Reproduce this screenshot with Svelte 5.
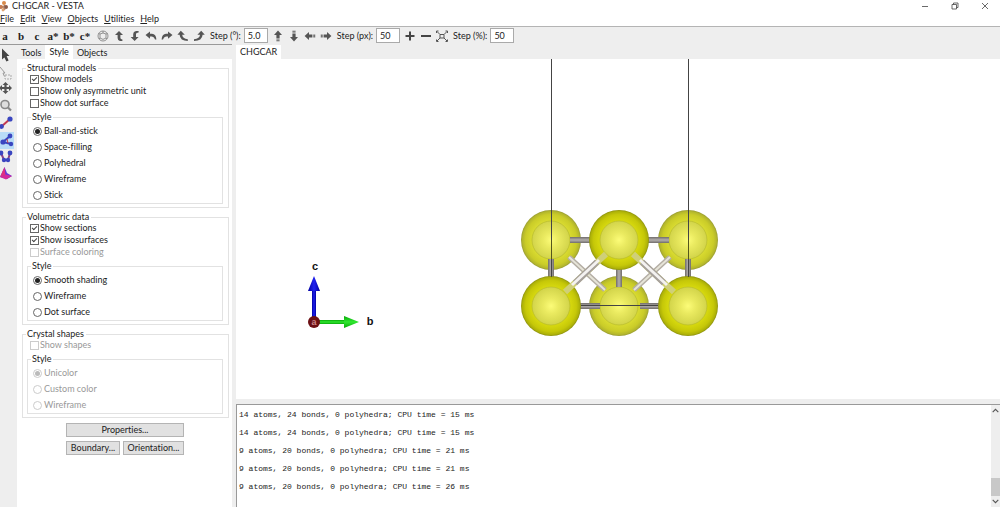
<script lang="ts">
  const menus = ['File', 'Edit', 'View', 'Objects', 'Utilities', 'Help'];
  const axes = ['a', 'b', 'c', 'a*', 'b*', 'c*'];
  const tools = ['select', 'area', 'move', 'zoom', 'distance', 'angle', 'dihedral', 'facing'];

  const rotateIcons = [
    { name: 'Rotate up', d: 'M6 1 L10 5 H7.4 V8 Q7.4 9.2 9.4 9.6 V11 H7 Q4.6 10.6 4.6 8 V5 H2 Z' },
    { name: 'Rotate down', d: 'M5.6 11 L1.6 7 H4.2 V4 Q4.2 1.6 7 1 H9.6 V2.4 Q7 2.8 7 4 V7 H9.6 Z' },
    { name: 'Rotate left', d: 'M0.5 5 L5 1.4 V3.8 H7 Q11 4 11.4 9.6 H10 Q9.4 6.6 7 6.4 H5 V8.8 Z' },
    { name: 'Rotate right', d: 'M11.5 5 L7 1.4 V3.8 H5 Q1 4 0.6 9.6 H2 Q2.6 6.6 5 6.4 H7 V8.8 Z' },
    { name: 'Rotate counterclockwise', d: 'M3.8 0.8 L7.8 4.8 H5.2 Q5.4 8.6 10.8 9.2 V11 Q3 11 2.6 4.8 H0.4 Z' },
    { name: 'Rotate clockwise', d: 'M8.2 0.8 L11.8 4.8 H9.6 Q9.2 11 1 11 V9.2 Q6.8 8.6 7 4.8 H4.4 Z' }
  ];

  const moveIcons = [
    { name: 'Move up', turn: 0 },
    { name: 'Move down', turn: 180 },
    { name: 'Move left', turn: 270 },
    { name: 'Move right', turn: 90 }
  ];

  const groups = [
    {
      title: 'Structural models',
      disabled: false,
      checks: [
        { label: 'Show models', on: true, disabled: false },
        { label: 'Show only asymmetric unit', on: false, disabled: false },
        { label: 'Show dot surface', on: false, disabled: false }
      ],
      styles: ['Ball-and-stick', 'Space-filling', 'Polyhedral', 'Wireframe', 'Stick']
    },
    {
      title: 'Volumetric data',
      disabled: false,
      checks: [
        { label: 'Show sections', on: true, disabled: false },
        { label: 'Show isosurfaces', on: true, disabled: false },
        { label: 'Surface coloring', on: false, disabled: true }
      ],
      styles: ['Smooth shading', 'Wireframe', 'Dot surface']
    },
    {
      title: 'Crystal shapes',
      disabled: true,
      checks: [{ label: 'Show shapes', on: false, disabled: true }],
      styles: ['Unicolor', 'Custom color', 'Wireframe']
    }
  ];

  const backAtoms = [[551, 240], [688, 240], [619, 306]];
  const frontAtoms = [[619, 240], [551, 306], [688, 306]];

  const log = [
    '14 atoms, 24 bonds, 0 polyhedra; CPU time = 15 ms',
    '14 atoms, 24 bonds, 0 polyhedra; CPU time = 15 ms',
    '9 atoms, 20 bonds, 0 polyhedra; CPU time = 21 ms',
    '9 atoms, 20 bonds, 0 polyhedra; CPU time = 21 ms',
    '9 atoms, 20 bonds, 0 polyhedra; CPU time = 26 ms'
  ].join('\n\n');

  let tool = $state('angle');
</script>

<div class="window">
  <header class="titlebar">
    <svg class="logo" viewBox="0 0 10 12" aria-hidden="true">
      <path d="M0 6 L3 7 L5 5 M3 7 L5 10" stroke="#b98a68" stroke-width="1.4" fill="none" />
      <circle cx="4" cy="3" r="2" fill="#d98a4a" />
      <circle cx="1" cy="7" r="2" fill="#c47a50" />
      <circle cx="6" cy="7" r="2" fill="#8a5a48" />
      <circle cx="3" cy="10" r="1.4" fill="#e2a470" />
    </svg>
    <span class="title">CHGCAR - VESTA</span>
    <button class="win" aria-label="Minimize">
      <svg viewBox="0 0 8 8"><path d="M1 4.5 H7" /></svg>
    </button>
    <button class="win" aria-label="Restore">
      <svg viewBox="0 0 8 8"><path d="M1 2.5 H5.5 V7 H1 Z M2.5 2.5 V1 H7 V5.5 H5.5" /></svg>
    </button>
    <button class="win" aria-label="Close">
      <svg viewBox="0 0 8 8"><path d="M1 1 L7 7 M7 1 L1 7" /></svg>
    </button>
  </header>

  <nav class="menubar">
    {#each menus as menu}
      <button><u>{menu[0]}</u>{menu.slice(1)}</button>
    {/each}
  </nav>

  <div class="toolbar">
    <div class="set axes">
      {#each axes as axis}
        <button class="axis">{axis}</button>
      {/each}
    </div>
    <div class="set">
      <button aria-label="Default orientation">
        <svg viewBox="0 0 12 12" fill="none" stroke="#888" stroke-width="0.9">
          <circle cx="6" cy="6" r="5" />
          <path d="M3 4 L6 3 L9 4 V8 L6 9.4 L3 8 Z M6 3 V1 M3 4 L1.4 3.4 M9 4 L10.6 3.4 M3 8 L2 9 M9 8 L10 9" />
        </svg>
      </button>
      {#each rotateIcons as icon}
        <button aria-label={icon.name}>
          <svg viewBox="0 0 12 12" fill="#555"><path d={icon.d} /></svg>
        </button>
      {/each}
    </div>
    <label class="step">Step (°): <input value="5.0" /></label>
    <div class="set">
      {#each moveIcons as icon}
        <button aria-label={icon.name}>
          <svg viewBox="0 0 12 12" fill="#555">
            <g transform="rotate({icon.turn} 6 6)">
              <path d="M6 0.6 L10 5 H7.6 V8 H4.4 V5 H2 Z" />
              <path d="M4.4 8.6 H7.6 V9.6 H4.4 Z M4.4 10.2 H7.6 V11.2 H4.4 Z" />
            </g>
          </svg>
        </button>
      {/each}
    </div>
    <label class="step">Step (px): <input value="50" /></label>
    <div class="set">
      <button aria-label="Zoom in">
        <svg viewBox="0 0 12 12" fill="#444"><path d="M5 1.5 H7 V5 H10.5 V7 H7 V10.5 H5 V7 H1.5 V5 H5 Z" /></svg>
      </button>
      <button aria-label="Zoom out">
        <svg viewBox="0 0 12 12" fill="#444"><path d="M1 5 H11 V7 H1 Z" /></svg>
      </button>
      <button aria-label="Fit to screen">
        <svg viewBox="0 0 12 12" fill="none" stroke="#555">
          <path d="M4 4.5 H8 V8 H4 Z M1 1.5 L4 4.5 M11 1.5 L8 4.5 M1 11 L4 8 M11 11 L8 8" />
          <path d="M0.5 3 V1 H2.5 M9.5 1 H11.5 V3 M0.5 9.5 V11.5 H2.5 M9.5 11.5 H11.5 V9.5" />
        </svg>
      </button>
    </div>
    <label class="step">Step (%): <input value="50" /></label>
  </div>

  <div class="body">
    <div class="tools">
      {#each tools as name}
        <button class:selected={tool === name} aria-label={name} onclick={() => (tool = name)}>
          <svg viewBox="0 0 14 16">
            {#if name === 'select'}
              <path d="M2 0.5 L9.5 8 H6.6 L8.6 12.4 L6.4 13.4 L4.4 9.4 L2 11.4 Z" fill="#444" />
            {:else if name === 'area'}
              <path d="M0 2 L5 8 H3 L4.4 11.4" fill="none" stroke="#999" />
              <path d="M5 10 H11 V14 H5 Z" fill="none" stroke="#aaa" stroke-dasharray="2 1" />
            {:else if name === 'move'}
              <path d="M5.5 0 L8.5 3 H6.6 V5 H9 V3 L12 6 L9 9 V7 H6.6 V9 H8.5 L5.5 12 L2.5 9 H4.4 V7 H2 V9 L-1 6 L2 3 V5 H4.4 V3 H2.5 Z" fill="#555" />
            {:else if name === 'zoom'}
              <circle cx="5" cy="5.5" r="4" fill="#ddd" stroke="#888" stroke-width="1.6" />
              <path d="M8 8.5 L11 11.5" stroke="#888" stroke-width="2.2" />
            {:else if name === 'distance'}
              <path d="M2 10 L10 3" stroke="#c33a50" stroke-width="2" />
              <circle cx="1.5" cy="10.5" r="2.4" fill="#3a46c0" />
              <circle cx="10" cy="3" r="2.6" fill="#3a46c0" />
            {:else if name === 'angle'}
              <path d="M10 3 L3 9 L11 11" stroke="#3a46c0" stroke-width="2" fill="none" />
              <circle cx="10" cy="3" r="2.4" fill="#3a46c0" />
              <circle cx="3" cy="9" r="2.6" fill="#3a46c0" />
              <circle cx="11" cy="11" r="2.2" fill="#3a46c0" />
              <path d="M7 6 L8 10" stroke="#c33a50" />
            {:else if name === 'dihedral'}
              <path d="M1 3 L4 10 L8 10 L10 3" stroke="#8a4488" stroke-width="2" fill="none" />
              <circle cx="1" cy="3" r="2.4" fill="#3a46c0" />
              <circle cx="4" cy="10" r="2.2" fill="#3a46c0" />
              <circle cx="8" cy="10" r="2.2" fill="#3a46c0" />
              <circle cx="10" cy="3" r="2.4" fill="#3a46c0" />
            {:else}
              <path d="M0 10 L4.5 0 L7 6 L12 9 L7 12 Z" fill="#6a35d8" />
              <path d="M0 10 L4.5 0 L5.4 8 Z" fill="#e03080" />
              <path d="M0 10 L5.4 7.6 L12 9 L6 12.4 Z" fill="#d42a9a" />
            {/if}
          </svg>
        </button>
      {/each}
    </div>

    <aside class="side">
      <div class="tabs">
        <button class="tab">Tools</button>
        <button class="tab active">Style</button>
        <button class="tab">Objects</button>
      </div>

      <div class="panel">
        {#each groups as group}
          <fieldset class="group">
            <legend>{group.title}</legend>
            {#each group.checks as check}
              <label class="check" class:off={check.disabled}>
                <input type="checkbox" checked={check.on} disabled={check.disabled} />{check.label}
              </label>
            {/each}
            <fieldset class="styles">
              <legend>Style</legend>
              {#each group.styles as style, i}
                <label class="radio" class:off={group.disabled}>
                  <input type="radio" name={group.title} checked={i === 0} disabled={group.disabled} />{style}
                </label>
              {/each}
            </fieldset>
          </fieldset>
        {/each}

        <div class="actions">
          <button class="wide">Properties...</button>
          <button>Boundary...</button>
          <button>Orientation...</button>
        </div>
      </div>
    </aside>

    <main class="main">
      <div class="tabs">
        <button class="tab active">CHGCAR</button>
      </div>

      <div class="canvas">
        <svg class="scene" viewBox="236 59 764 340" role="img" aria-label="Crystal structure viewed along a">
          <defs>
            <radialGradient id="front">
              <stop offset="0" stop-color="#dede18" />
              <stop offset="0.65" stop-color="#d6d80e" />
              <stop offset="0.85" stop-color="#c6c808" />
              <stop offset="0.95" stop-color="#aeb208" />
              <stop offset="1" stop-color="#8c9010" />
            </radialGradient>
            <radialGradient id="back">
              <stop offset="0" stop-color="#e2e23c" />
              <stop offset="0.65" stop-color="#d8da30" />
              <stop offset="0.85" stop-color="#cacc28" />
              <stop offset="0.95" stop-color="#b4b72c" />
              <stop offset="1" stop-color="#989b34" />
            </radialGradient>
            <radialGradient id="core">
              <stop offset="0" stop-color="#fcfc78" />
              <stop offset="0.4" stop-color="#eaea60" />
              <stop offset="1" stop-color="#d2d44a" />
            </radialGradient>
            <linearGradient id="blue">
              <stop offset="0" stop-color="#0000a0" />
              <stop offset="0.5" stop-color="#2020f0" />
              <stop offset="1" stop-color="#0000a0" />
            </linearGradient>
            <linearGradient id="green" x2="0" y2="1">
              <stop offset="0" stop-color="#08a808" />
              <stop offset="0.5" stop-color="#30e830" />
              <stop offset="1" stop-color="#08a808" />
            </linearGradient>
          </defs>

          <rect x="312" y="289" width="4" height="30" fill="url(#blue)" />
          <path d="M314 276 L320 291 H308 Z" fill="url(#blue)" />
          <rect x="318" y="320" width="30" height="4" fill="url(#green)" />
          <path d="M359 322 L344 316 V328 Z" fill="url(#green)" />
          <circle cx="314" cy="322" r="6" fill="#6c1014" />
          <text class="axis-a" x="314" y="325">a</text>
          <text class="axis-label" x="315" y="270">c</text>
          <text class="axis-label" x="370" y="325">b</text>

          {#each backAtoms as [x, y]}
            <circle cx={x} cy={y} r="30" fill="url(#back)" />
            <circle cx={x} cy={y} r="19" fill="url(#core)" stroke="#b4b72c" stroke-width="0.6" />
          {/each}

          <g class="bond back">
            <path d="M569 257 L605 290 M670 257 L634 290" />
          </g>
          <g class="bond shine back">
            <path d="M569 257 L605 290 M670 257 L634 290" />
          </g>
          <g class="bond grey">
            <path d="M570 240 H593 M647 240 H669 M579 306 H600 M640 306 H661" />
            <path d="M551 259 V277 M688 259 V277 M619 269 V287" />
          </g>
          <g class="bond grey shine">
            <path d="M570 240 H593 M647 240 H669 M579 306 H600 M640 306 H661" />
            <path d="M551 259 V277 M688 259 V277 M619 269 V287" />
          </g>

          {#each frontAtoms as [x, y]}
            <circle cx={x} cy={y} r="30" fill="url(#front)" />
            <circle cx={x} cy={y} r="19" fill="url(#core)" stroke="#b4b72c" stroke-width="0.6" />
          {/each}

          <g class="bond tint">
            <path d="M565 292 L606 254 M674 292 L633 254" />
          </g>
          <g class="bond">
            <path d="M575 283 L597 262 M664 283 L642 262" />
          </g>
          <g class="bond shine">
            <path d="M572 285 L599 260 M667 285 L640 260" />
          </g>

          <path d="M551.5 59 V240 M551.5 259 V277 M688.5 59 V240 M688.5 259 V277 M581 305.5 H658" stroke="#444" />
          <path d="M551.5 240 V259 M688.5 240 V259" stroke="#55561c" />
        </svg>
      </div>

      <div class="output">
        <textarea readonly spellcheck="false" aria-label="Text area">{log}</textarea>
        <div class="scroll">
          <button aria-label="Scroll up"><svg viewBox="0 0 8 8"><path d="M1.5 5.5 L4 3 L6.5 5.5" /></svg></button>
          <div class="thumb"></div>
          <button aria-label="Scroll down"><svg viewBox="0 0 8 8"><path d="M1.5 2.5 L4 5 L6.5 2.5" /></svg></button>
        </div>
      </div>
    </main>
  </div>
</div>

<style>
  :global(body) {
    margin: 0;
    background: #fff;
  }

  .window {
    display: flex;
    flex-direction: column;
    min-height: 100vh;
    font: 9px/12px Lato, "Noto Sans", sans-serif;
    font-variant-ligatures: none;
    color: #222;
  }

  button,
  input {
    box-sizing: border-box;
    margin: 0;
    padding: 0;
    border: 0;
    background: none;
    font: inherit;
    font-variant-ligatures: none;
    color: inherit;
  }

  svg {
    display: block;
  }

  .titlebar {
    display: flex;
    align-items: center;
    height: 12px;
  }

  .logo {
    width: 10px;
    height: 12px;
  }

  .title {
    flex: 1;
    padding-left: 2px;
  }

  .win {
    width: 30px;
    height: 12px;
    display: flex;
    justify-content: center;
    align-items: center;
  }

  .win svg {
    width: 8px;
    height: 8px;
    fill: none;
    stroke: #444;
    stroke-width: 0.8;
  }

  .menubar {
    display: flex;
    gap: 6px;
    height: 14px;
    align-items: center;
  }

  .toolbar {
    display: flex;
    align-items: center;
    gap: 2px;
    height: 17px;
    border-top: 1px solid #b4b4b4;
    background: #eee;
  }

  .set {
    display: flex;
  }

  .set.axes {
    margin-left: -3px;
  }

  .set button {
    display: flex;
    justify-content: center;
    align-items: center;
    width: 16px;
    height: 16px;
  }

  .set svg {
    width: 12px;
    height: 12px;
  }

  .set .axis {
    font: bold 11px/16px "Liberation Serif", serif;
  }

  .step {
    display: flex;
    align-items: center;
    gap: 3px;
    padding-left: 1px;
    white-space: nowrap;
  }

  .step input {
    width: 24px;
    height: 15px;
    padding-left: 3px;
    border: 1px solid #aaa;
    background: #fff;
  }

  .body {
    display: flex;
    flex: 1;
  }

  .tools {
    width: 17px;
    padding-top: 2px;
    border-top: 1px solid #999;
    background: #eee;
    box-sizing: border-box;
  }

  .tools button {
    display: block;
    width: 14px;
    height: 17px;
  }

  .tools .selected {
    background: #b9dcf7;
  }

  .tools svg {
    width: 14px;
    height: 16px;
  }

  .side {
    width: 219px;
    box-sizing: border-box;
    border-right: 4px solid #eee;
  }

  .tabs {
    display: flex;
    height: 14px;
    background: #eee;
    border-top: 1px solid #eee;
  }

  .side .tabs {
    border-top-color: #999;
  }

  .tab {
    padding: 2px 4px 0;
  }

  .tab.active {
    padding: 0 4px;
    background: #fff;
  }

  .panel {
    padding: 4px 3px 0 5px;
  }

  fieldset {
    min-width: 0;
    margin: 0;
    padding: 0 3px 3px 7px;
    border: 1px solid #e2e2e2;
  }

  legend {
    padding: 0 2px 0 1px;
    line-height: 10px;
  }

  .group {
    margin-bottom: 4px;
  }

  .group > legend {
    margin-left: -4px;
  }

  .styles {
    margin: 3px 2px 0 -3px;
    padding: 1px 5px 0;
  }

  .styles > legend {
    margin-left: -2px;
  }

  .check,
  .radio {
    display: flex;
    align-items: center;
  }

  .check {
    height: 12px;
    gap: 1px;
  }

  .radio {
    height: 16px;
    gap: 2px;
  }

  .off {
    color: #999;
  }

  .check input,
  .radio input {
    appearance: none;
    display: grid;
    place-items: center;
    width: 9px;
    height: 9px;
    border: 1px solid #666;
    background: #fff;
  }

  .radio input {
    border-radius: 50%;
  }

  .check input:checked::after {
    content: "";
    width: 4px;
    height: 2px;
    border: solid #444;
    border-width: 0 0 1px 1px;
    transform: translateY(-1px) rotate(-45deg);
  }

  .radio input:checked::after {
    content: "";
    width: 5px;
    height: 5px;
    border-radius: 50%;
    background: #222;
  }

  .check.off input,
  .radio.off input {
    border-color: #ccc;
  }

  .radio.off input:checked::after {
    background: #bbb;
  }

  .actions {
    display: grid;
    grid-template-columns: 54px 61px;
    justify-content: center;
    gap: 4px 3px;
    padding: 1px 1px 0 0;
  }

  .actions button {
    height: 14px;
    border: 1px solid #b4b4b4;
    background: #e1e1e1;
    line-height: 12px;
  }

  .actions .wide {
    grid-column: span 2;
  }

  .main {
    display: flex;
    flex: 1;
    flex-direction: column;
    min-width: 0;
  }

  .canvas {
    flex: 1;
    min-height: 0;
    border-bottom: 5px solid #eee;
  }

  .scene {
    width: 100%;
    height: auto;
  }

  .axis-label,
  .axis-a {
    font: bold 11px "Liberation Sans", sans-serif;
    text-anchor: middle;
    fill: #111;
  }

  .axis-a {
    font-size: 9px;
    fill: #c88;
  }

  .bond {
    fill: none;
    stroke: #a6a09c;
    stroke-width: 6;
  }

  .bond.shine {
    stroke: #f4f2f0;
    stroke-width: 3;
  }

  .bond.back {
    stroke: #b4aea4;
    stroke-width: 5;
  }

  .bond.shine.back {
    stroke: #e6e4d8;
    stroke-width: 2;
  }

  .bond.grey {
    stroke: #7c7876;
  }

  .bond.grey.shine {
    stroke: #a8a4a2;
    stroke-width: 3;
  }

  .bond.tint {
    stroke: #cfcf78;
  }

  .output {
    display: flex;
    height: 103px;
    box-sizing: border-box;
    border-top: 1px solid #999;
    border-left: 1px solid #999;
  }

  textarea {
    flex: 1;
    margin: 0;
    padding: 5px 2px;
    border: 0;
    outline: 0;
    resize: none;
    overflow: hidden;
    font: 8px/9px "Liberation Mono", monospace;
    color: #222;
  }

  .scroll {
    display: flex;
    flex-direction: column;
    width: 9px;
    background: #eee;
  }

  .scroll button {
    height: 11px;
  }

  .scroll svg {
    width: 9px;
    height: 9px;
    fill: none;
    stroke: #555;
  }

  .thumb {
    height: 18px;
    margin-top: auto;
    background: #c8c8c8;
  }
</style>
